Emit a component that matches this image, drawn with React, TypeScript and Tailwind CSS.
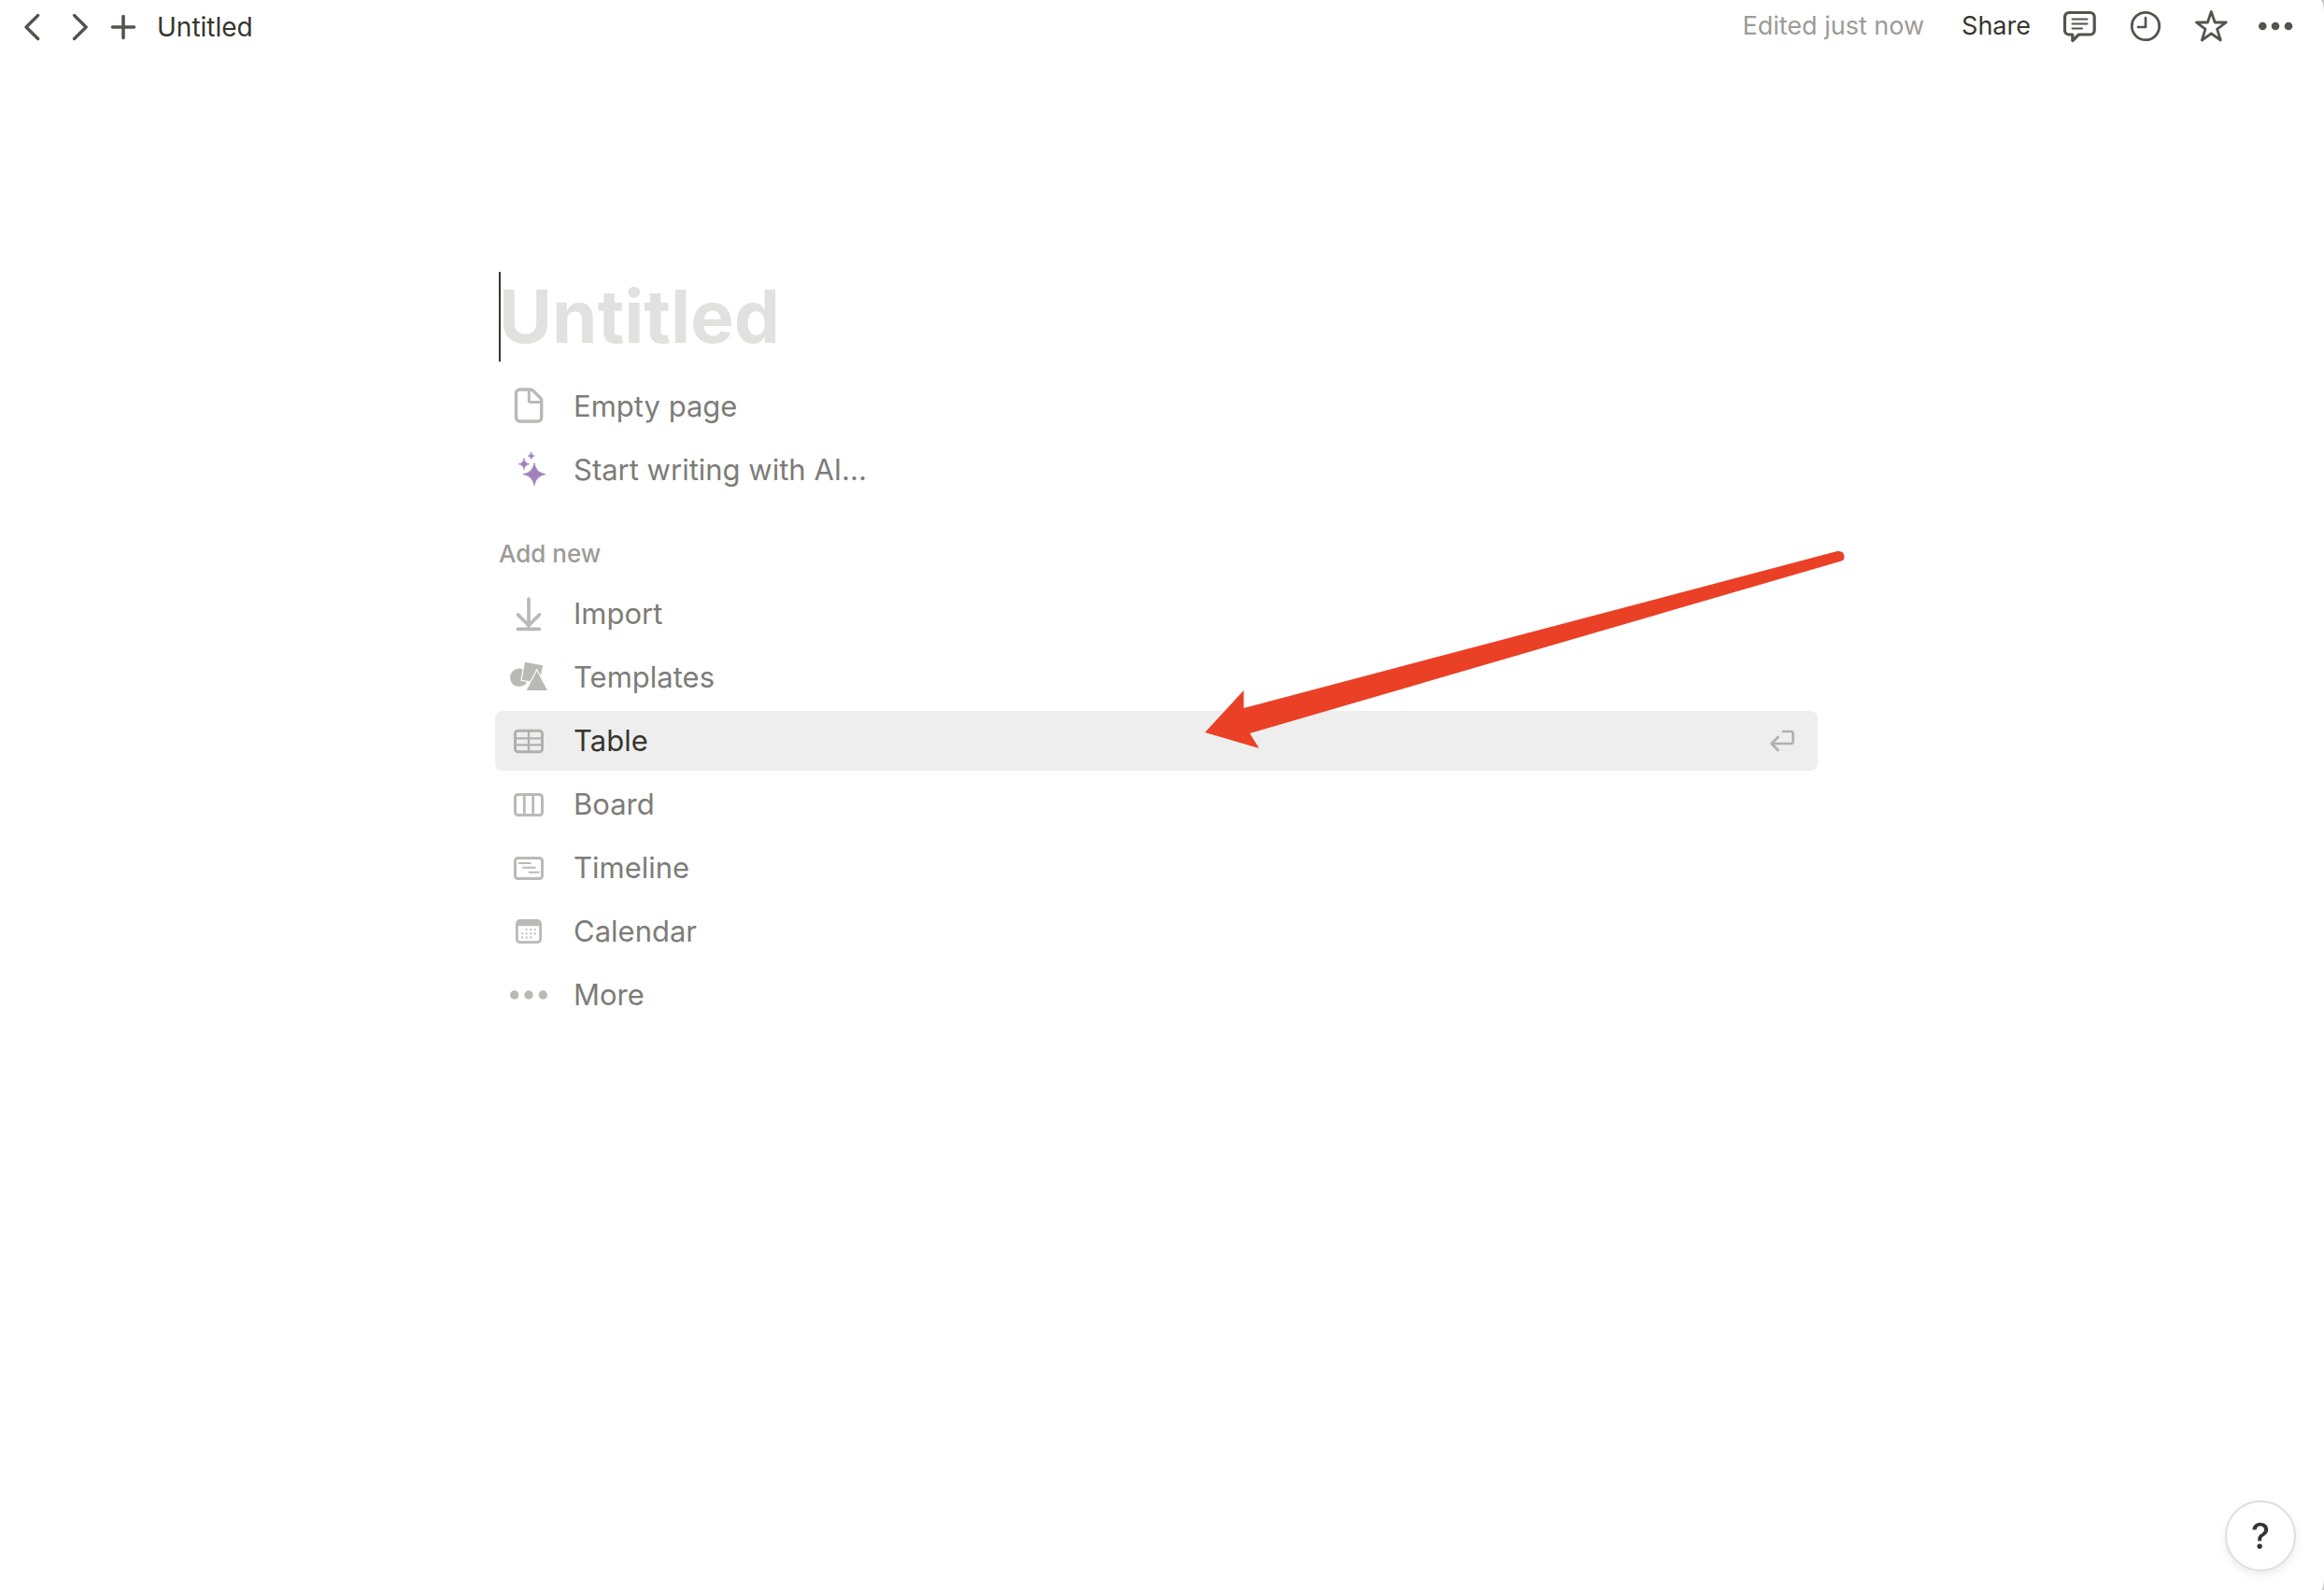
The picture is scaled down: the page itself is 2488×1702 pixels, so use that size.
import React from "react";

type IconProps = { children: React.ReactNode; className?: string };

function Icon({ children, className = "" }: IconProps) {
  return (
    <svg
      viewBox="0 0 40 40"
      aria-hidden="true"
      fill="none"
      stroke="currentColor"
      strokeLinecap="round"
      strokeLinejoin="round"
      className={`size-10 shrink-0 ${className}`}
    >
      {children}
    </svg>
  );
}

// Four-pointed star centred on (x, y) with radius r.
const spark = (x: number, y: number, r: number) => {
  const k = r * 0.14;
  return `M${x} ${y - r}Q${x + k} ${y - k} ${x + r} ${y}Q${x + k} ${y + k} ${x} ${y + r}Q${x - k} ${y + k} ${x - r} ${y}Q${x - k} ${y - k} ${x} ${y - r}Z`;
};

const PageIcon = () => (
  <Icon>
    <path
      strokeWidth="3.4"
      d="M10.5 2H22q1.6 0 2.7 1.1l7.8 7.9q1.2 1.2 1.2 2.9V32a4 4 0 0 1-4 4H10.5a4 4 0 0 1-4-4V6a4 4 0 0 1 4-4z"
    />
    <path strokeWidth="3" d="M20.3 3v10.5a2 2 0 0 0 2 2H33" />
  </Icon>
);

const SparkleIcon = () => (
  <Icon className="text-[#a083bd]">
    <g fill="currentColor" strokeWidth="0.7">
      <path d={spark(26, 24.7, 12)} />
      <path d={spark(15, 13.7, 5.8)} />
      <path d={spark(22.7, 5, 3.6)} />
    </g>
  </Icon>
);

const ImportIcon = () => (
  <Icon>
    <path strokeWidth="3.7" d="M20 4v29M8.5 21 20 32.5 31.5 21M8.5 36.3h23" />
  </Icon>
);

const TemplatesIcon = () => (
  <Icon>
    <g fill="currentColor" stroke="none">
      <circle cx="9.7" cy="20.3" r="9.7" />
      <g stroke="#fff" strokeWidth="2.4" strokeLinejoin="miter" paintOrder="stroke">
        <path d="M16 3.7 35 7.3 31.6 26 12.7 22.7z" />
        <path d="M28.7 13 40 34H17.7z" />
      </g>
    </g>
  </Icon>
);

const TableIcon = () => (
  <Icon>
    <rect x="5.5" y="9.2" width="29" height="22.5" rx="3" strokeWidth="3" />
    <path strokeWidth="2.3" strokeLinecap="butt" d="M20 9v23M6 17.3h28M6 24.3h28" />
  </Icon>
);

const BoardIcon = () => (
  <Icon>
    <rect x="5.5" y="9.5" width="29" height="22" rx="3" strokeWidth="3" />
    <path strokeWidth="2.8" strokeLinecap="butt" d="M15.3 9v23M24.7 9v23" />
  </Icon>
);

const TimelineIcon = () => (
  <Icon>
    <rect x="5.5" y="9.5" width="29" height="22" rx="3" strokeWidth="3" />
    <path strokeWidth="2" d="M9.7 15h12M14 19.7h12.7M20.7 24.7h10" />
  </Icon>
);

const CalendarIcon = () => (
  <Icon>
    <rect x="7.4" y="8.5" width="25.2" height="23.2" rx="3.5" strokeWidth="2.8" />
    <path stroke="none" fill="currentColor" d="M7 9h26v5.2H7z" />
    <path
      strokeWidth="2.2"
      d="M17.7 18h.01M22.2 18h.01M26.7 18h.01M13.2 22.3h.01M17.7 22.3h.01M22.2 22.3h.01M26.7 22.3h.01M13.2 26.6h.01M17.7 26.6h.01M22.2 26.6h.01"
    />
  </Icon>
);

const MoreIcon = () => (
  <Icon>
    <g fill="currentColor" stroke="none">
      <circle cx="4.7" cy="20" r="4.7" />
      <circle cx="20" cy="20" r="4.7" />
      <circle cx="35.3" cy="20" r="4.7" />
    </g>
  </Icon>
);

const ReturnIcon = () => (
  <svg
    viewBox="0 0 32 32"
    aria-hidden="true"
    fill="none"
    stroke="currentColor"
    strokeWidth="2.6"
    strokeLinecap="round"
    strokeLinejoin="round"
    className="size-8 shrink-0"
  >
    <path d="M17 6h8.500q2 0 2 2v9q0 2-2 2H4.500M11.500 12l-7 7 7 7" />
  </svg>
);

function Row({ icon, label, active = false }: { icon: React.ReactNode; label: string; active?: boolean }) {
  return (
    <li>
      <button
        type="button"
        className={`flex h-16 w-full items-center gap-7 rounded-lg pr-[22px] pl-4 text-left text-[31px] ${
          active ? "bg-[#eeeeee]" : "bg-transparent"
        }`}
      >
        <span className={active ? "text-[#b0b0ae]" : "text-[#b9b9b7]"}>{icon}</span>
        <span className={active ? "text-[#37352f]" : "text-[#7d7c78]"}>{label}</span>
        {active && (
          <span className="ml-auto text-[#b0b0ae]">
            <ReturnIcon />
          </span>
        )}
      </button>
    </li>
  );
}

function TopButton({ label, children }: { label: string; children: React.ReactNode }) {
  return (
    <button type="button" aria-label={label} className="flex h-10 w-[70px] items-center justify-center text-[#55534e]">
      {children}
    </button>
  );
}

function TopBar() {
  return (
    <header className="flex h-14 items-center justify-between pr-4 pl-2 text-[#37352f]">
      <nav aria-label="History" className="flex items-center pt-[2px] text-[#55534e]">
        <button type="button" aria-label="Back" className="flex w-13 justify-center">
          <Icon>
            <path strokeWidth="3.4" d="M26.700 7.500 14 20l12.700 12.500" />
          </Icon>
        </button>
        <button type="button" aria-label="Forward" className="flex w-13 justify-center">
          <Icon>
            <path strokeWidth="3.4" d="M13.500 7.500 26.200 20 13.500 32.500" />
          </Icon>
        </button>
        <button type="button" aria-label="New page" className="flex w-10 justify-center">
          <Icon>
            <path strokeWidth="3.6" d="M20 8.500v23M8.500 20h23" />
          </Icon>
        </button>
        <a href="#untitled" className="ml-4 text-[28px] leading-10 text-[#37352f]">
          Untitled
        </a>
      </nav>
      <div className="flex items-center">
        <span className="text-[27px] leading-10 text-[#9c9b97]">Edited just now</span>
        <button type="button" className="mr-[18px] ml-10 text-[27px] leading-10">
          Share
        </button>
        <TopButton label="Comments">
          <Icon>
            <path
              strokeWidth="3.2"
              d="M8 5.500h22.700a4.500 4.500 0 0 1 4.500 4.500v14.500a4.500 4.500 0 0 1-4.500 4.500H18.500L11.800 35.500V29H8a4.500 4.500 0 0 1-4.500-4.500V10A4.500 4.500 0 0 1 8 5.500z"
            />
            <path strokeWidth="2" d="M11.500 12.500h16M11.500 17.500h16M11.500 22.500h10.500" />
          </Icon>
        </TopButton>
        <TopButton label="Page history">
          <Icon>
            <circle cx="20" cy="20" r="14.7" strokeWidth="2.8" />
            <path strokeWidth="2.6" d="M20 11v10h-8" />
          </Icon>
        </TopButton>
        <TopButton label="Favorite">
          <Icon>
            <path
              strokeWidth="2.8"
              d="M20.300 4.500 24.200 16H36.200L26.600 23.200 30.300 35 20.300 27.800 10.300 35 14 23.200 4.400 16H16.400z"
            />
          </Icon>
        </TopButton>
        <TopButton label="More actions">
          <Icon>
            <g fill="currentColor" stroke="none">
              <circle cx="5.3" cy="20" r="4.3" />
              <circle cx="19" cy="20" r="4.3" />
              <circle cx="33" cy="20" r="4.3" />
            </g>
          </Icon>
        </TopButton>
      </div>
    </header>
  );
}

export default function App() {
  return (
    <div className="bg-[#c4c4c4]">
      <div className="relative min-h-screen rounded-tr-[4px_14px] rounded-br-[3px_14px] bg-white font-['Inter',sans-serif]">
        <TopBar />
        <main className="pt-[235px] pr-3">
          <div className="relative mx-auto max-w-[1416px]">
            <div className="relative pl-1">
              <span className="absolute top-0 left-1 h-24 w-0.5 bg-[#37352f]" />
              <input
                type="text"
                aria-label="Page title"
                placeholder="Untitled"
                className="block h-24 w-full bg-transparent text-[78px] leading-24 font-bold text-[#37352f] outline-none placeholder:text-[#e1e1e0]"
              />
            </div>
            <ul className="mt-4 flex flex-col gap-1">
              <Row icon={<PageIcon />} label="Empty page" />
              <Row icon={<SparkleIcon />} label="Start writing with AI..." />
            </ul>
            <h2 className="mt-[38px] pl-1 text-[26px] leading-10 font-medium text-[#9c9b97]">Add new</h2>
            <ul className="mt-3 flex flex-col gap-1">
              <Row icon={<ImportIcon />} label="Import" />
              <Row icon={<TemplatesIcon />} label="Templates" />
              <Row icon={<TableIcon />} label="Table" active />
              <Row icon={<BoardIcon />} label="Board" />
              <Row icon={<TimelineIcon />} label="Timeline" />
              <Row icon={<CalendarIcon />} label="Calendar" />
              <Row icon={<MoreIcon />} label="More" />
            </ul>
            <svg
              viewBox="0 0 700 220"
              aria-hidden="true"
              className="pointer-events-none absolute top-[294px] left-[755px] h-[220px] w-[700px]"
            >
              <path fill="#ea4026" d="M5 199 46.500 154V173L682 5q7-1 7.500 6 0 3-3 4.500L53 200 63 216z" />
            </svg>
          </div>
        </main>
        <button
          type="button"
          aria-label="Help"
          className="fixed right-[30px] bottom-5 flex size-19 items-center justify-center rounded-full border-2 border-[#dfdfde] bg-white text-[38px] leading-none font-medium text-[#37352f] shadow-[0_4px_10px_rgba(15,15,15,0.08)]"
        >
          ?
        </button>
      </div>
    </div>
  );
}
